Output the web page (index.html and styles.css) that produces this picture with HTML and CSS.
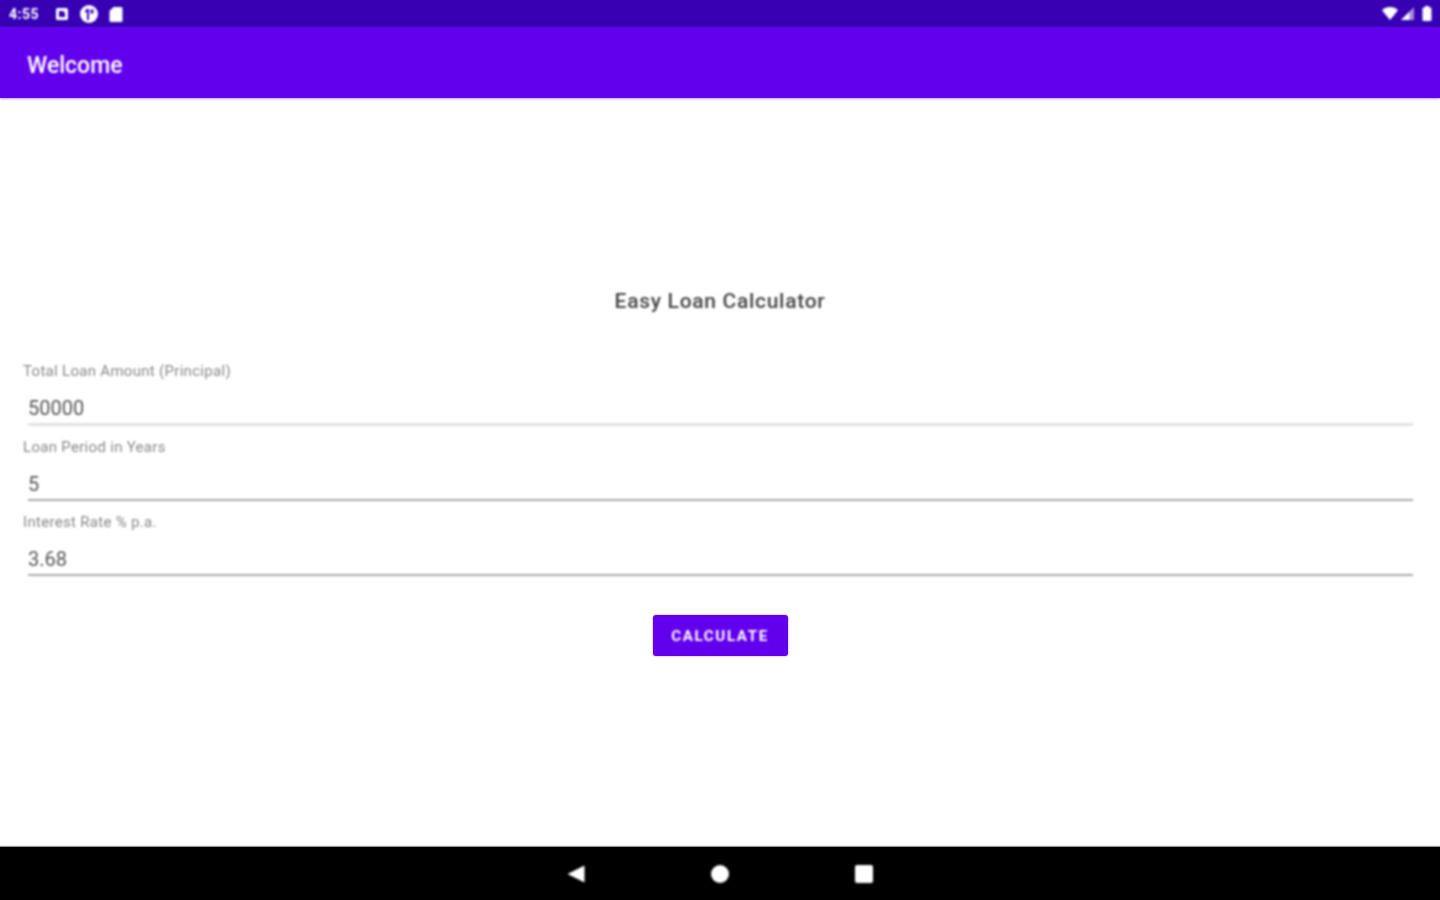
FILE: index.html
```html
<!DOCTYPE html>
<html lang="en">
<head>
    <meta charset="UTF-8">
    <meta name="viewport" content="width=device-width, initial-scale=1.0">
    <title>Welcome</title>
    <link rel="stylesheet" href="styles.css">
</head>
<body>
    <div class="screen">
        <div class="status-bar">
            <div class="status-left">
                <span class="clock">4:55</span>
                <svg width="14" height="14" viewBox="0 0 14 14">
                    <rect x="1" y="1" width="12" height="12" rx="1.5" fill="#fff"/>
                    <path d="M4 4h4l2 2v4H4z" fill="#3700b3"/>
                </svg>
                <svg class="icon-circle" width="20" height="20" viewBox="0 0 20 20">
                    <circle cx="10" cy="10" r="9" fill="#fff"/>
                    <path d="M8 5h2v11H8z" fill="#3700b3"/>
                    <path d="M6 8.500C6 6 7 5 8.500 5v3zM11.500 5.500h3v4h-3z" fill="#3700b3"/>
                </svg>
                <svg width="14" height="16" viewBox="0 0 14 16">
                    <path d="M4.500 1H12a1.500 1.500 0 0 1 1.500 1.500v12A1.500 1.500 0 0 1 12 16H2a1.500 1.500 0 0 1-1.500-1.500V5z" fill="#fff"/>
                </svg>
            </div>
            <div class="status-right">
                <svg width="16" height="13" viewBox="0 0 18 14" preserveAspectRatio="none">
                    <path d="M0 3.500C2.500 1.200 5.500 0 9 0s6.500 1.200 9 3.500L9 14z" fill="#fff"/>
                </svg>
                <svg width="13" height="13" viewBox="0 0 14 14">
                    <path d="M14 0v14H0z" fill="#fff" fill-opacity="0.55"/>
                    <path d="M9 5.500V14H0z" fill="#fff"/>
                </svg>
                <svg class="icon-battery" width="10" height="15" viewBox="0 0 10 15">
                    <path d="M3 0h4v1.500h1.500a1 1 0 0 1 1 1V14a1 1 0 0 1-1 1h-7a1 1 0 0 1-1-1V2.500a1 1 0 0 1 1-1H3z" fill="#fff"/>
                </svg>
            </div>
        </div>

        <header class="app-bar"><span>Welcome</span></header>

        <main class="content">
            <h1 class="title">Easy Loan Calculator</h1>
            <form class="loan-form">
                <div class="field">
                    <label>Total Loan Amount (Principal)</label>
                    <div class="value value-first">50000</div>
                </div>
                <div class="field">
                    <label>Loan Period in Years</label>
                    <div class="value">5</div>
                </div>
                <div class="field">
                    <label>Interest Rate % p.a.</label>
                    <div class="value">3.68</div>
                </div>
                <button type="button" class="calc-btn"><span>CALCULATE</span></button>
            </form>
        </main>

        <nav class="nav-bar">
            <svg width="20" height="20" viewBox="0 0 20 20">
                <path d="M18.500 1.500v17L1.500 10z" fill="#fff"/>
            </svg>
            <svg width="20" height="20" viewBox="0 0 20 20">
                <circle cx="10" cy="10" r="9" fill="#fff"/>
            </svg>
            <svg width="20" height="20" viewBox="0 0 20 20">
                <rect x="1" y="1" width="18" height="18" rx="2" fill="#fff"/>
            </svg>
        </nav>
    </div>
</body>
</html>
```

FILE: styles.css
```css
html, body {
    margin: 0;
    padding: 0;
    height: 100%;
    background-color: white;
}

.screen {
    display: flex;
    flex-direction: column;
    height: 900px;
    font-family: Roboto, "Liberation Sans", sans-serif;
    overflow: hidden;
}

/* the reference is a soft, upscaled capture */
.clock,
.status-bar svg,
.app-bar span,
.title,
.field label,
.field .value,
.calc-btn span,
.nav-bar svg {
    filter: blur(0.8px);
}

.status-bar {
    display: flex;
    justify-content: space-between;
    align-items: center;
    height: 27px;
    padding: 0 8px 0 9px;
    background-color: #3700b3;
    color: white;
    flex-shrink: 0;
}

.status-left,
.status-right {
    display: flex;
    align-items: center;
}

.status-left svg,
.status-right svg {
    display: block;
}

.clock {
    font-size: 14px;
    font-weight: 700;
    margin-right: 14px;
    letter-spacing: 0.5px;
    width: 32px;
}

.icon-circle {
    margin: 0 10px;
}

.status-right {
    gap: 3px;
}

.icon-battery {
    margin-left: 5px;
}

.app-bar {
    height: 71px;
    padding-left: 27px;
    line-height: 77px;
    font-size: 23px;
    font-weight: 500;
    color: white;
    background-color: #6200ee;
    box-shadow: 0 1px 2px rgba(98, 0, 238, 0.4);
    flex-shrink: 0;
}

.app-bar span {
    display: inline-block;
}

.content {
    flex: 1;
    padding-top: 190px;
}

.title {
    margin: 0;
    font-size: 21px;
    font-weight: 500;
    line-height: 26px;
    text-align: center;
    color: #444;
    letter-spacing: 0.7px;
}

.loan-form {
    display: flex;
    flex-direction: column;
    padding: 48px 27px 0 23px;
}

.field {
    height: 75.500px;
}

.field label {
    display: block;
    font-size: 15px;
    line-height: 18px;
    letter-spacing: 0.3px;
    color: #888;
}

.value {
    margin: 15px 0 0 5px;
    padding-bottom: 1px;
    height: 27px;
    font-size: 20px;
    line-height: 27px;
    color: #555;
    border-bottom: 2px solid #aaa;
}

.value-first {
    border-bottom: 3px solid #e2e2e2;
}

.calc-btn {
    align-self: center;
    margin: 26px 0 0 4px;
    width: 135px;
    height: 41px;
    padding: 2px 0 0;
    font-family: inherit;
    font-size: 15px;
    font-weight: 700;
    letter-spacing: 1.7px;
    color: #fff;
    background-color: #6200ee;
    border: none;
    border-radius: 3px;
    box-shadow: 0 0 2px rgba(98, 0, 238, 0.5);
}

.calc-btn span {
    display: inline-block;
}

.nav-bar {
    display: flex;
    justify-content: center;
    align-items: center;
    gap: 124px;
    height: 53px;
    background-color: black;
    box-shadow: 0 -1px 1px rgba(0, 0, 0, 0.4);
    flex-shrink: 0;
}
```
